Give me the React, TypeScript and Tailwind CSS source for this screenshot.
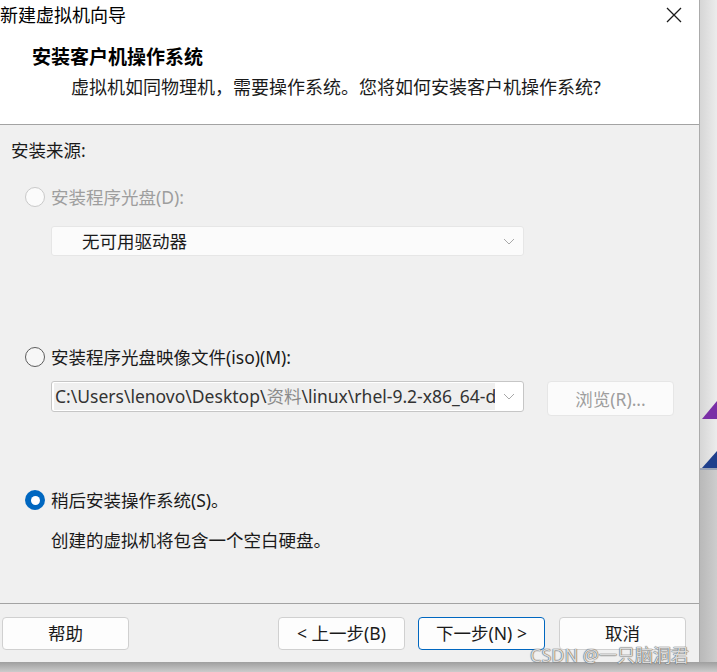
import type { ReactNode } from "react";

const cjk = "font-['Noto_Sans','Noto_Sans_CJK_SC',sans-serif]";

function Radio({ state }: { state: "off" | "on" | "disabled" }) {
  if (state === "on") {
    return (
      <span className="flex h-[20px] w-[20px] items-center justify-center rounded-full bg-[#0067c0]">
        <span className="h-[9px] w-[9px] rounded-full bg-white" />
      </span>
    );
  }
  return (
    <span
      className={
        state === "disabled"
          ? "h-[20px] w-[20px] rounded-full border border-[#c9c9c9] bg-[#fbfbfb]"
          : "h-[20px] w-[20px] rounded-full border border-[#5c5c5c] bg-[#f7f7f7]"
      }
    />
  );
}

function Chevron() {
  return (
    <svg width="12" height="7" viewBox="0 0 12 7" className="shrink-0">
      <path d="M1 1l5 5 5-5" fill="none" stroke="#a8a8a8" strokeWidth="1" />
    </svg>
  );
}

function RadioRow({ state, children }: { state: "off" | "on" | "disabled"; children: ReactNode }) {
  return (
    <div className="flex h-[24px] items-center gap-[6px] pl-[25px]">
      <Radio state={state} />
      <span className={state === "disabled" ? "text-[#9e9e9e]" : "text-[#1a1a1a]"}>{children}</span>
    </div>
  );
}

function WizButton({ children, focused }: { children: ReactNode; focused?: boolean }) {
  return (
    <button
      className={
        "flex h-[33px] w-[127px] items-center justify-center rounded-[4px] bg-[#fdfdfd] text-[17.5px] text-[#1a1a1a] " +
        (focused ? "border border-[#0067c0]" : "border border-[#d0d0d0]")
      }
    >
      {children}
    </button>
  );
}

function Wizard() {
  return (
    <div className="flex w-[700px] shrink-0 flex-col border-r border-[#ababab] bg-[#f0f0f0]">
      {/* title bar */}
      <div className="flex h-[30px] items-center justify-between bg-white pr-[17px]">
        <span className="text-[18px] leading-[26px] text-black">新建虚拟机向导</span>
        <svg width="16" height="16" viewBox="0 0 16 16">
          <path d="M1 1l14 14M15 1L1 15" stroke="#1a1a1a" strokeWidth="1.3" />
        </svg>
      </div>

      {/* header */}
      <div className="h-[95px] border-b border-[#a3a3a3] bg-white pt-[15px]">
        <div className="pl-[32px] text-[19px] font-bold leading-[24px] text-black">安装客户机操作系统</div>
        <div className="mt-[6px] pl-[71px] text-[18px] leading-[24px] text-[#1a1a1a]">
          虚拟机如同物理机，需要操作系统。您将如何安装客户机操作系统?
        </div>
      </div>

      {/* body */}
      <div className="flex-1 pt-[13px] text-[17.5px] leading-[24px]">
        <div className="pl-[11px] text-[#1a1a1a]">安装来源:</div>

        <div className="mt-[23px]">
          <RadioRow state="disabled">安装程序光盘(D):</RadioRow>
        </div>
        <div className="ml-[51px] mt-[17px] flex h-[30px] w-[473px] items-center justify-between rounded-[3px] border border-[#e6e6e6] bg-[#fbfbfb] pl-[30px] pr-[8px]">
          <span className="text-[#1a1a1a]">无可用驱动器</span>
          <Chevron />
        </div>

        <div className="mt-[89px]">
          <RadioRow state="off">安装程序光盘映像文件(iso)(M):</RadioRow>
        </div>
        <div className="mt-[12px] flex items-start gap-[23px] pl-[51px]">
          <div className="flex h-[31px] w-[473px] items-center gap-[8px] rounded-[3px] border border-[#c6c6c6] bg-white pl-[2px] pr-[8px]">
            <div className="h-[27px] flex-1 overflow-hidden whitespace-nowrap bg-[#efefef] pl-[1px] text-[17.5px] leading-[27px] text-[#333]">
              C:\Users\lenovo\Desktop\<span className="text-[#8a8a8a]">资料</span>\linux\rhel-9.2-x86_64-dvd.iso
            </div>
            <Chevron />
          </div>
          <div className="flex h-[35px] w-[127px] items-center justify-center rounded-[4px] border border-[#e6e6e6] bg-[#fbfbfb] text-[#9e9e9e]">
            浏览(R)...
          </div>
        </div>

        <div className="mt-[72px]">
          <RadioRow state="on">稍后安装操作系统(S)。</RadioRow>
        </div>
        <div className="mt-[16px] pl-[51px] text-[#1a1a1a]">创建的虚拟机将包含一个空白硬盘。</div>
      </div>

      {/* footer */}
      <div className="flex h-[59px] items-start border-t border-[#a3a3a3] pl-[2px] pr-[13px] pt-[13px]">
        <WizButton>帮助</WizButton>
        <div className="ml-auto flex gap-[13px]">
          <WizButton>&lt; 上一步(B)</WizButton>
          <WizButton focused>下一步(N) &gt;</WizButton>
          <div className="ml-[1px]">
            <WizButton>取消</WizButton>
          </div>
        </div>
      </div>
    </div>
  );
}

function Desktop() {
  return (
    <div className="relative flex flex-1 flex-col shadow-[inset_3px_0_3px_-1px_rgba(0,0,0,0.22)]">
      <div className="h-[468px] bg-gradient-to-r from-[#d6d6d6] to-[#ececec]" />
      <div className="h-[2px] bg-[#9aa3b5]" />
      <div className="flex-1 bg-gradient-to-r from-[#b9b9b9] to-[#cdcdcd]" />
      <svg className="absolute left-[2px] top-[401px]" width="15" height="18" viewBox="0 0 15 18">
        <path d="M0 18L15 0V18Z" fill="#7a2fa6" />
      </svg>
      <svg className="absolute left-[2px] top-[451px]" width="15" height="17" viewBox="0 0 15 17">
        <path d="M0 17L15 0V17Z" fill="#1f3f8c" />
      </svg>
    </div>
  );
}

export default function App() {
  return (
    <div className={"relative h-[672px] w-[717px] overflow-hidden bg-[#c4c4c4] " + cjk}>
      <div className="flex h-[662px]">
        <Wizard />
        <Desktop />
      </div>
      <div className="h-[10px] bg-gradient-to-b from-[#9f9f9f] to-[#cbcbcb]" />
      <span className="absolute left-[530px] top-[642px] text-[18px] leading-[26px] text-white/80 [text-shadow:0_0_1px_#444,0_0_1px_#444]">
        CSDN @一只脑洞君
      </span>
    </div>
  );
}
